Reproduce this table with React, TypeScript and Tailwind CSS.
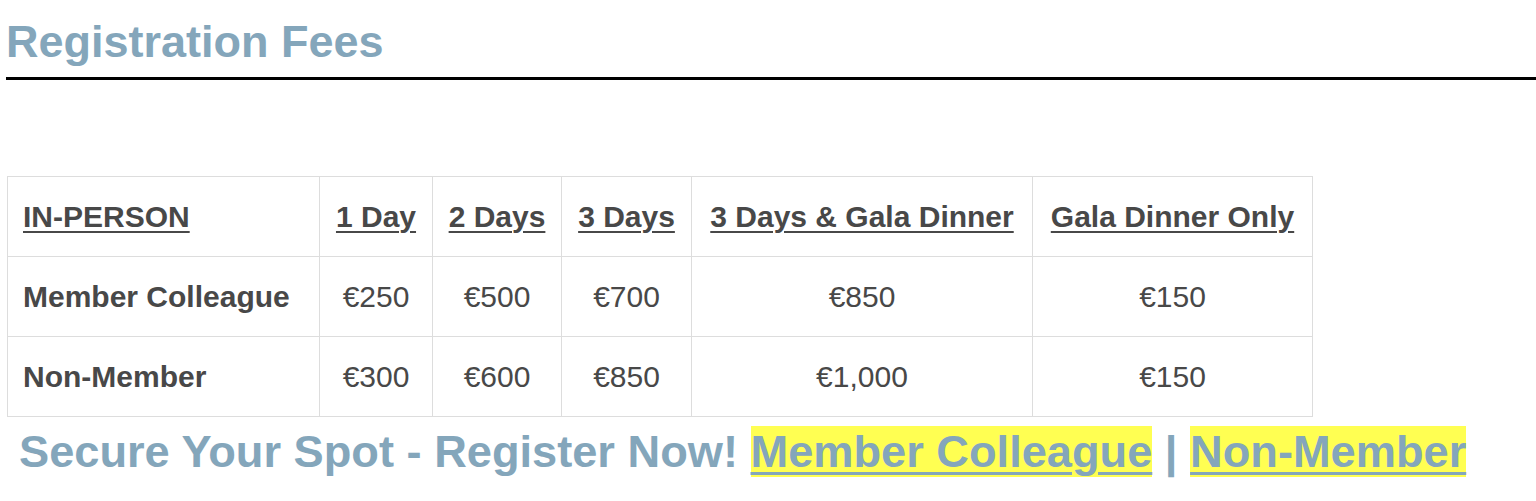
import React from "react";

const cols = [
  { label: "IN-PERSON", w: "w-[312px]" },
  { label: "1 Day", w: "w-[113px]" },
  { label: "2 Days", w: "w-[129px]" },
  { label: "3 Days", w: "w-[130px]" },
  { label: "3 Days & Gala Dinner", w: "w-[341px]" },
  { label: "Gala Dinner Only", w: "w-[280px]" },
];

const rows = [
  ["Member Colleague", "€250", "€500", "€700", "€850", "€150"],
  ["Non-Member", "€300", "€600", "€850", "€1,000", "€150"],
];

const cell = "h-[80px] flex items-center border-r border-b border-[#dddddd]";

const App = () => {
  return (
    <div
      className="w-[1536px] h-[501px] bg-white overflow-hidden pl-[6px]"
      style={{ fontFamily: '"Liberation Sans", Arial, sans-serif' }}
    >
      <h2 className="pt-[16px] text-[45px] leading-[52px] font-bold text-[#84a6bb]">
        Registration Fees
      </h2>
      <div className="mt-[9px] h-[3px] bg-black" />

      <div className="mt-[96px] ml-[1px] w-fit border-t border-l border-[#dddddd] text-[30px] leading-[34px] text-[#484848]">
        <div className="flex">
          {cols.map((c, i) => (
            <div
              key={c.label}
              className={`${cell} ${c.w} ${i === 0 ? "pl-[15px]" : "justify-center"}`}
            >
              <span className="font-bold underline decoration-2 underline-offset-[4px]">
                {c.label}
              </span>
            </div>
          ))}
        </div>
        {rows.map((r) => (
          <div key={r[0]} className="flex">
            {r.map((v, i) => (
              <div
                key={i}
                className={`${cell} ${cols[i].w} ${
                  i === 0 ? "pl-[15px] font-bold" : "justify-center"
                }`}
              >
                {v}
              </div>
            ))}
          </div>
        ))}
      </div>

      <p className="mt-[9px] pl-[13px] text-[45.2px] leading-[52px] font-bold text-[#84a6bb] whitespace-nowrap">
        Secure Your Spot - Register Now!{" "}
        <a
          href="#"
          className="bg-[#ffff52] underline decoration-[3px] underline-offset-[5px]"
        >
          Member Colleague
        </a>{" "}
        |{" "}
        <a
          href="#"
          className="bg-[#ffff52] underline decoration-[3px] underline-offset-[5px]"
        >
          Non-Member
        </a>
      </p>
    </div>
  );
};

export default App;
